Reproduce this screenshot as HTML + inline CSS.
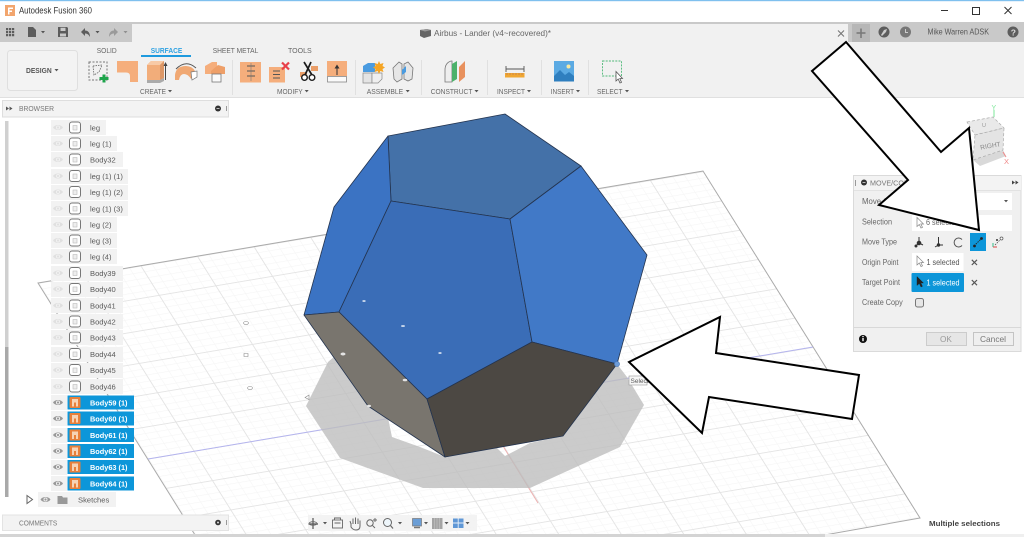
<!DOCTYPE html>
<html><head><meta charset="utf-8"><title>Autodesk Fusion 360</title>
<style>
html,body{margin:0;padding:0;background:#fff;width:1024px;height:537px;overflow:hidden}
svg{display:block;filter:blur(.35px)}
text{font-family:"Liberation Sans",sans-serif;font-size:7.6px;fill:#5a5a5a}
.b{font-weight:bold}
.w{fill:#fff;font-weight:bold}
.g{font-size:7.2px;fill:#666}
.t{font-size:7.2px;fill:#666}
.p{font-size:7.8px;fill:#666}
</style></head><body>
<svg width="1024" height="537" viewBox="0 0 1024 537" xmlns="http://www.w3.org/2000/svg">
<defs>
<pattern id="grid" patternUnits="userSpaceOnUse" width="100" height="100" patternTransform="matrix(.566 -.095 .183 .293 668 209.5)">
<rect x="20" width="1.1" height="100" fill="#f5f5f5"/><rect x="40" width="1.1" height="100" fill="#f5f5f5"/><rect x="60" width="1.1" height="100" fill="#f5f5f5"/><rect x="80" width="1.1" height="100" fill="#f5f5f5"/>
<rect y="20" width="100" height="1.9" fill="#f5f5f5"/><rect y="40" width="100" height="1.9" fill="#f5f5f5"/><rect y="60" width="100" height="1.9" fill="#f5f5f5"/><rect y="80" width="100" height="1.9" fill="#f5f5f5"/>
<rect x="0" width="1.6" height="100" fill="#e2e2e2"/><rect y="0" width="100" height="2.6" fill="#e2e2e2"/>
</pattern>
<g id="eye"><path d="M-5 0C-3-3.4 3-3.4 5 0C3 3.4-3 3.4-5 0Z" fill="currentColor"/><circle r="2" fill="#f2f2f2"/><circle r="1.1" fill="currentColor"/></g>
<g id="body"><rect x="-5.5" y="-5.5" width="11" height="11" rx="2.5" fill="#fff" stroke="#777" stroke-width="1"/><rect x="-2" y="-2" width="4" height="4.5" fill="#eee" stroke="#bbb" stroke-width=".6"/></g>
<g id="bodyS"><rect x="-5.5" y="-5.5" width="11" height="11" rx="1" fill="#e8803a"/><path d="M-3-3.5H3V4H1V0H-1V4H-3Z" fill="#f6d3b5"/></g>
<path id="car" d="M-2-1H2L0 1.4Z" fill="#555"/>
</defs>

<!-- viewport -->
<polygon points="38,283 703,171 920,518 813.4,537 196.3,537" fill="#fff"/>
<polygon points="38,283 703,171 920,518 813.4,537 196.3,537" fill="url(#grid)"/>
<path d="M196.300 537L38 283L703 171L920 518L813.400 537" fill="none" stroke="#aaa" stroke-width="1"/>
<path d="M148 459L813 347" stroke="#b4b4ee" stroke-width="1"/>
<path d="M503 446L538 503" stroke="#eeb0b0" stroke-width="1"/>
<path fill-rule="evenodd" d="M328 362L306 406L340 458L423 488L530 488L620 447L644 405L627 377L617 364L400 300ZM388 418L392 437L420 447L445 457ZM497 448L505 456L530 443L563 436Z" fill="#bcbcbc" fill-opacity=".78"/>
<g fill="#fff" stroke="#888" stroke-width=".6"><ellipse cx="246" cy="323" rx="2.4" ry="1.5"/><path d="M244 353.500H248V356.500H244Z"/><ellipse cx="250" cy="388" rx="2.4" ry="1.5"/><path d="M305 397.500L309 395V399.500Z"/></g>

<!-- solid -->
<g stroke="#24344f" stroke-width=".8" stroke-linejoin="round">
<polygon points="388,136 505,114 581,166 510,219 391,201" fill="#4471a8"/>
<polygon points="388,136 391,201 339,312 304,315 334,207" fill="#3b73c3"/>
<polygon points="391,201 510,219 532,342 427,399 339,312" fill="#3a6db7"/>
<polygon points="581,166 647,255 617,364 532,342 510,219" fill="#4179c7"/>
<polygon points="304,315 339,312 427,399 445,457 368,406" fill="#79756e"/>
<polygon points="427,399 532,342 617,364 563,436 445,457" fill="#4c4843"/>
</g>
<g fill="#c4d4ea"><ellipse cx="364" cy="301" rx="1.700" ry="1"/><ellipse cx="403" cy="326" rx="2" ry="1"/><ellipse cx="440" cy="353" rx="1.700" ry="1"/></g>
<g fill="#e4e4e4"><ellipse cx="343" cy="354" rx="2.500" ry="1.500"/><ellipse cx="405" cy="380" rx="2.300" ry="1.300"/><ellipse cx="369" cy="406" rx="2" ry="1.200"/></g>
<circle cx="617" cy="364" r="2.600" fill="#6c9bd8" stroke="#4b78b6" stroke-width=".6"/>
<rect x="629" y="376" width="18" height="9" fill="#f6f6f6" stroke="#999" stroke-width=".6"/>
<text x="630.500" y="383" style="font-size:6.500px">Select</text>

<!-- title bar -->
<rect width="1024" height="1.200" fill="#7fc0ee"/>
<rect x="5" y="5" width="10" height="11" fill="#f2a56d"/><path d="M8 7.500H13V9H9.500V10.500H12V12H9.500V14.500H8Z" fill="#fff"/>
<text x="19" y="13.500" textLength="73" lengthAdjust="spacingAndGlyphs" style="font-size:8.800px;fill:#333">Autodesk Fusion 360</text>
<path d="M941 10.500H948" stroke="#333" stroke-width="1"/>
<rect x="972.500" y="7.500" width="7" height="7" fill="none" stroke="#333" stroke-width="1"/>
<path d="M1004.500 7L1011.500 14M1011.500 7L1004.500 14" stroke="#333" stroke-width="1"/>

<!-- quick bar -->
<rect y="22" width="1024" height="20" fill="#c9c9c9"/>
<rect x="132" y="24" width="716" height="18" fill="#f1f1f1"/>
<rect x="852" y="24" width="18" height="18" fill="#b7b7b7"/>
<g fill="#5c5c5c">
<path d="M6 28h2.200v2.200H6zM9 28h2.200v2.200H9zM12 28h2.200v2.200H12zM6 31h2.200v2.200H6zM9 31h2.200v2.200H9zM12 31h2.200v2.200H12zM6 34h2.200v2.200H6zM9 34h2.200v2.200H9zM12 34h2.200v2.200H12z"/>
<path d="M28 27h5l3 3v7h-8z"/><use href="#car" x="43" y="32"/>
<path d="M58 27h9l1 1v9H58zM60.500 27.800v3.200h5v-3.200zM60 33.500v3h6v-3z" fill-rule="evenodd"/>
<path d="M81 32L85 28V30.500C88 30.500 90 32.500 90 37C88.500 34.500 87.500 33.500 85 33.500V36Z"/><use href="#car" x="97.500" y="32"/>
</g>
<path d="M118 32L114 28V30.500C111 30.500 109 32.500 109 37C110.500 34.500 111.500 33.500 114 33.500V36Z" fill="#9a9a9a"/><use href="#car" x="125.500" y="32" opacity=".5"/>
<path d="M427 29L431 30V36L424 38L420 36V30Z" fill="#666"/><path d="M420 30L427 29L431 30L425 31.500Z" fill="#999"/>
<text x="434" y="36" textLength="117" lengthAdjust="spacingAndGlyphs" style="font-size:8.400px;fill:#666">Airbus - Lander (v4~recovered)*</text>
<path d="M838 30.500L844 36.500M844 30.500L838 36.500" stroke="#777" stroke-width="1.100"/>
<path d="M861 28.500V38M856.500 33H865.500" stroke="#777" stroke-width="1.500"/>
<circle cx="884" cy="32" r="5.500" fill="#5d5d5d"/><path d="M881 35L884 30L887 29L886 32L882 36Z" fill="#ccc"/>
<circle cx="905.500" cy="32" r="5.500" fill="#777"/><path d="M905.500 29V32.500H908" stroke="#ccc" stroke-width="1" fill="none"/>
<text x="927.500" y="34.500" textLength="61.500" lengthAdjust="spacingAndGlyphs" style="font-size:7.800px;fill:#555">Mike Warren ADSK</text>
<circle cx="1013" cy="32" r="5.500" fill="#5d5d5d"/><text x="1010.700" y="35.300" class="b" style="font-size:8.500px;fill:#ddd">?</text>

<!-- ribbon -->
<rect y="42" width="1024" height="55" fill="#f1f1f1"/>
<path d="M0 97.500H1024" stroke="#e0e0e0" stroke-width="1"/>
<rect x="7.500" y="50.500" width="70" height="40" rx="3" fill="#f3f3f3" stroke="#dfdfdf"/>
<text x="26" y="73" class="b" textLength="25.700" lengthAdjust="spacingAndGlyphs" style="font-size:7px;fill:#555">DESIGN</text><use href="#car" x="56.500" y="70"/>
<text x="96.700" y="53" class="t" textLength="20" lengthAdjust="spacingAndGlyphs">SOLID</text>
<text x="150.700" y="53" class="b" textLength="31.600" lengthAdjust="spacingAndGlyphs" style="font-size:7.200px;fill:#2fa2e2">SURFACE</text>
<rect x="141" y="55" width="50" height="2" fill="#1e9ade"/>
<text x="212.700" y="53" class="t" textLength="45.600" lengthAdjust="spacingAndGlyphs">SHEET METAL</text>
<text x="288" y="53" class="t" textLength="23.700" lengthAdjust="spacingAndGlyphs">TOOLS</text>
<g stroke="#e0e0e0" stroke-width="1"><path d="M232.500 60V95M355.500 60V95M421.500 60V95M487.500 60V95M541.500 60V95M588.500 60V95"/></g>
<g class="labels">
<text x="140" y="94" class="g" textLength="26" lengthAdjust="spacingAndGlyphs">CREATE</text><use href="#car" x="170" y="91"/>
<text x="277" y="94" class="g" textLength="25.700" lengthAdjust="spacingAndGlyphs">MODIFY</text><use href="#car" x="306.700" y="91"/>
<text x="366.700" y="94" class="g" textLength="36.500" lengthAdjust="spacingAndGlyphs">ASSEMBLE</text><use href="#car" x="407.700" y="91"/>
<text x="430.700" y="94" class="g" textLength="41.700" lengthAdjust="spacingAndGlyphs">CONSTRUCT</text><use href="#car" x="476.500" y="91"/>
<text x="497" y="94" class="g" textLength="28" lengthAdjust="spacingAndGlyphs">INSPECT</text><use href="#car" x="529" y="91"/>
<text x="550.700" y="94" class="g" textLength="23.300" lengthAdjust="spacingAndGlyphs">INSERT</text><use href="#car" x="578" y="91"/>
<text x="597" y="94" class="g" textLength="25.500" lengthAdjust="spacingAndGlyphs">SELECT</text><use href="#car" x="627" y="91"/>
</g>

<!-- create icons -->
<rect x="89" y="62" width="18" height="18" fill="none" stroke="#777" stroke-width="1" stroke-dasharray="2 1.500"/>
<path d="M93 66L102 65L99 72L94 75Z" fill="none" stroke="#666" stroke-width=".8" stroke-dasharray="1.500 1"/>
<path d="M102.500 74.500H105.500V77H108.500V80H105.500V82.500H102.500V80H99.500V77H102.500Z" fill="#1ea44b"/>
<path d="M117 61H138V82H130V76Q130 72.500 126 72.500H117Z" fill="#f5ae7c"/>
<path d="M147 65L151 61H164V78L160 80H147Z" fill="#f2ad7a"/><path d="M147 65L151 61H164L160 65Z" fill="#f8caa6"/><path d="M160 65L164 61V78L160 80Z" fill="#dc9766"/>
<path d="M147 80H160L164 78V81L160 83H147Z" fill="#aaa"/>
<path d="M165.500 65V80" stroke="#444" stroke-width="1"/><path d="M163.500 66L165.500 62L167.500 66Z" fill="#444"/>
<path d="M176 69Q186 59 196 68" fill="none" stroke="#555" stroke-width="1"/>
<path d="M175 75Q176 66 186 66Q192 66 195 71L191 79Q188 74 184 74Q180 74 179 80H175Z" fill="#f0a873"/>
<path d="M191 72L197 71V77L192 80Z" fill="#fff" stroke="#777" stroke-width=".7"/>
<path d="M205 66L212 62H217V67L213 70V74H205Z" fill="#f5ae7c"/><path d="M218 65L225 67V74H211V71Z" fill="#ee9f68"/>
<rect x="212" y="74" width="9" height="8" fill="#fafafa" stroke="#777" stroke-width=".8"/>

<!-- modify icons -->
<rect x="240" y="62" width="21" height="20.500" fill="#f5ae7c"/>
<path d="M247 66H255M247 71H255M247 76H255" stroke="#555" stroke-width="1"/><path d="M251 63V81" stroke="#777" stroke-width=".6"/>
<rect x="269" y="67" width="16" height="15.500" fill="#f5ae7c"/>
<path d="M273 71H280M273 74.500H280M273 78H280" stroke="#555" stroke-width="1"/>
<path d="M282 62.500L289 69.500M289 62.500L282 69.500" stroke="#e8404a" stroke-width="2.200"/>
<path d="M311 66H318V71H311ZM300 72H307V77H300Z" fill="#ea9e68"/>
<path d="M304 62L312 75M311 62L305 75" stroke="#1c1c1c" stroke-width="1.700"/>
<circle cx="304.500" cy="77.500" r="2.800" fill="#fff" stroke="#1c1c1c" stroke-width="1.400"/><circle cx="312" cy="77.500" r="2.800" fill="#fff" stroke="#1c1c1c" stroke-width="1.400"/>
<rect x="327" y="61" width="20" height="15" fill="#f5ae7c"/><rect x="327.500" y="76.500" width="19" height="5.500" fill="#fafafa" stroke="#888" stroke-width=".8"/>
<path d="M337 75V67" stroke="#333" stroke-width="1"/><path d="M334.500 68.500L337 64.500L339.500 68.500Z" fill="#333"/>

<!-- assemble -->
<path d="M363 66L368 63H375V72H363Z" fill="#4a9be0"/><path d="M363 73H372V83H363Z" fill="#e4e4e4" stroke="#888" stroke-width=".7"/><path d="M372 73H382V79L378 83H372Z" fill="#efefef" stroke="#888" stroke-width=".7"/>
<path d="M379 61L380.300 64L383.500 63L382.500 66L385 67.500L382.500 69L383.500 72L380.300 71L379 74L377.700 71L374.500 72L375.500 69L373 67.500L375.500 66L374.500 63L377.700 64Z" fill="#f5a524"/>
<path d="M393 68L399 62L402 64V79L397 82L394 79Z" fill="#e6e6e6" stroke="#777" stroke-width=".8"/>
<path d="M413 68L408 62L404 64V79L408 81L412 79Z" fill="#e6e6e6" stroke="#777" stroke-width=".8"/><path d="M402 70L406 66V72L402 75Z" fill="#4a9be0"/>

<!-- construct -->
<path d="M445 82V70Q445 63 451 61H452V82Z" fill="#eee" stroke="#777" stroke-width=".8"/>
<path d="M452 64L457 61V79L452 82Z" fill="#4cb16a"/>
<path d="M459 67L465 61V77L459 82Z" fill="#e8915e"/>

<!-- inspect -->
<path d="M506 69H524M506 66V72M524 66V72" stroke="#555" stroke-width=".9" fill="none"/>
<rect x="505" y="73" width="19.500" height="4.500" fill="#f0a732"/>
<path d="M507 73v2M510 73v2M513 73v2M516 73v2M519 73v2M522 73v2" stroke="#a66" stroke-width=".5"/>

<!-- insert -->
<rect x="554" y="61" width="20" height="20.500" fill="#5baae3"/>
<path d="M554 76L560 70L565 75L569 72L574 76V81.500H554Z" fill="#2f7fbf"/>
<circle cx="568.500" cy="66.500" r="2" fill="#f7e9a3"/>

<!-- select -->
<rect x="602.500" y="61" width="19" height="15" fill="none" stroke="#4fb878" stroke-width=".9" stroke-dasharray="2 1.200"/>
<path d="M616 71.500V81L618.200 79L620 83L621.500 82.300L619.800 78.500H622.500Z" fill="#fff" stroke="#555" stroke-width=".8"/>

<!-- browser -->
<rect x="2.500" y="100.500" width="226" height="16.500" fill="#f3f3f3" stroke="#dedede"/>
<path d="M9 108.500L6 106.500V110.500ZM12.500 108.500L9.500 106.500V110.500Z" fill="#555"/>
<text x="19" y="111" class="t" textLength="35" lengthAdjust="spacingAndGlyphs" style="fill:#777">BROWSER</text>
<circle cx="218" cy="108.500" r="3" fill="#333"/><path d="M216.500 108.500H219.500" stroke="#ddd" stroke-width=".8"/>
<path d="M226.500 106V111" stroke="#999" stroke-width="1"/>
<rect x="5" y="121" width="3.500" height="226" fill="#d0d0d0"/>
<rect x="5" y="347" width="3.500" height="150" fill="#a9a9a9"/>

<g fill="#f2f2f2">
<rect x="51" y="120" width="55" height="15"/><rect x="51" y="136" width="66" height="15"/><rect x="51" y="152" width="72" height="15"/>
<rect x="51" y="169" width="77" height="15"/><rect x="51" y="185" width="77" height="15"/><rect x="51" y="201" width="77" height="15"/>
<rect x="51" y="217" width="66" height="15"/><rect x="51" y="233" width="66" height="15"/><rect x="51" y="249" width="66" height="15"/>
<rect x="51" y="266" width="72" height="15"/><rect x="51" y="282" width="72" height="15"/><rect x="51" y="298" width="72" height="15"/>
<rect x="51" y="314" width="72" height="15"/><rect x="51" y="330" width="72" height="15"/><rect x="51" y="347" width="72" height="15"/>
<rect x="51" y="363" width="72" height="15"/><rect x="51" y="379" width="72" height="15"/>
<rect x="51" y="395" width="16" height="15"/><rect x="51" y="411" width="16" height="15"/><rect x="51" y="428" width="16" height="15"/>
<rect x="51" y="444" width="16" height="15"/><rect x="51" y="460" width="16" height="15"/><rect x="51" y="476" width="16" height="15"/>
<rect x="38" y="492" width="78" height="15"/>
</g>
<g fill="#0d96d9">
<rect x="67.500" y="395.500" width="66.500" height="14"/><rect x="67.500" y="411.500" width="66.500" height="14"/><rect x="67.500" y="428" width="66.500" height="14"/>
<rect x="67.500" y="444" width="66.500" height="14"/><rect x="67.500" y="460" width="66.500" height="14"/><rect x="67.500" y="476.500" width="66.500" height="14"/>
</g>
<g style="color:#e0e0e0">
<use href="#eye" x="58" y="127.500"/><use href="#eye" x="58" y="143.500"/><use href="#eye" x="58" y="159.500"/><use href="#eye" x="58" y="176"/><use href="#eye" x="58" y="192"/><use href="#eye" x="58" y="208.500"/><use href="#eye" x="58" y="224.500"/><use href="#eye" x="58" y="240.500"/><use href="#eye" x="58" y="256.500"/><use href="#eye" x="58" y="273"/><use href="#eye" x="58" y="289"/><use href="#eye" x="58" y="305.500"/><use href="#eye" x="58" y="321.500"/><use href="#eye" x="58" y="337.500"/><use href="#eye" x="58" y="354"/><use href="#eye" x="58" y="370"/><use href="#eye" x="58" y="386.500"/>
</g>
<g style="color:#999">
<use href="#eye" x="58" y="402.500"/><use href="#eye" x="58" y="418.500"/><use href="#eye" x="58" y="435"/><use href="#eye" x="58" y="451"/><use href="#eye" x="58" y="467"/><use href="#eye" x="58" y="483.500"/><use href="#eye" x="45.500" y="499.500"/>
</g>
<use href="#body" x="75" y="127.500"/><use href="#body" x="75" y="143.500"/><use href="#body" x="75" y="159.500"/><use href="#body" x="75" y="176"/><use href="#body" x="75" y="192"/><use href="#body" x="75" y="208.500"/><use href="#body" x="75" y="224.500"/><use href="#body" x="75" y="240.500"/><use href="#body" x="75" y="256.500"/><use href="#body" x="75" y="273"/><use href="#body" x="75" y="289"/><use href="#body" x="75" y="305.500"/><use href="#body" x="75" y="321.500"/><use href="#body" x="75" y="337.500"/><use href="#body" x="75" y="354"/><use href="#body" x="75" y="370"/><use href="#body" x="75" y="386.500"/>
<use href="#bodyS" x="75" y="402.500"/><use href="#bodyS" x="75" y="418.500"/><use href="#bodyS" x="75" y="435"/><use href="#bodyS" x="75" y="451"/><use href="#bodyS" x="75" y="467"/><use href="#bodyS" x="75" y="483.500"/>
<text x="90" y="130.300">leg</text><text x="90" y="146.300">leg (1)</text><text x="90" y="162.300">Body32</text>
<text x="90" y="178.800">leg (1) (1)</text><text x="90" y="194.800">leg (1) (2)</text><text x="90" y="211.300">leg (1) (3)</text>
<text x="90" y="227.300">leg (2)</text><text x="90" y="243.300">leg (3)</text><text x="90" y="259.300">leg (4)</text>
<text x="90" y="275.800">Body39</text><text x="90" y="291.800">Body40</text><text x="90" y="308.300">Body41</text>
<text x="90" y="324.300">Body42</text><text x="90" y="340.300">Body43</text><text x="90" y="356.800">Body44</text>
<text x="90" y="372.800">Body45</text><text x="90" y="389.300">Body46</text>
<text x="90" y="405.300" class="w" textLength="37.500" lengthAdjust="spacingAndGlyphs">Body59 (1)</text><text x="90" y="421.300" class="w" textLength="37.500" lengthAdjust="spacingAndGlyphs">Body60 (1)</text>
<text x="90" y="437.800" class="w" textLength="37.500" lengthAdjust="spacingAndGlyphs">Body61 (1)</text><text x="90" y="453.800" class="w" textLength="37.500" lengthAdjust="spacingAndGlyphs">Body62 (1)</text>
<text x="90" y="469.800" class="w" textLength="37.500" lengthAdjust="spacingAndGlyphs">Body63 (1)</text><text x="90" y="486.300" class="w" textLength="37.500" lengthAdjust="spacingAndGlyphs">Body64 (1)</text>
<path d="M27 495.500L32.500 499.500L27 503.500Z" fill="#fff" stroke="#666" stroke-width="1"/>
<path d="M57.500 496H62L63 497.500H67.500V504H57.500Z" fill="#999"/>
<text x="78" y="502.300">Sketches</text>

<!-- comments -->
<rect x="2.500" y="515" width="226" height="15.500" fill="#f3f3f3" stroke="#e3e3e3"/>
<text x="19" y="525.500" class="t" textLength="38.300" lengthAdjust="spacingAndGlyphs" style="fill:#777">COMMENTS</text>
<circle cx="218" cy="522.500" r="2.800" fill="#333"/><circle cx="218" cy="522.500" r="1" fill="#ddd"/>
<path d="M226.500 520V525" stroke="#999" stroke-width="1"/>
<rect y="534" width="825" height="3" fill="#d4d4d4"/><rect x="825" y="534" width="199" height="3" fill="#efefef"/>
<text x="929" y="526" class="b" textLength="71" lengthAdjust="spacingAndGlyphs" style="fill:#444">Multiple selections</text>

<!-- nav bar -->
<rect x="308" y="515" width="169" height="16" fill="#f2f2f2" opacity=".9"/>
<g>
<path d="M313 518V529M308.500 524H318" stroke="#555" stroke-width="1.200"/><ellipse cx="313" cy="523.500" rx="4" ry="1.800" fill="none" stroke="#666" stroke-width=".8"/>
<use href="#car" x="325" y="523"/>
<rect x="332.500" y="520" width="10" height="8" fill="none" stroke="#666" stroke-width=".9"/><path d="M334.500 520V518H340.500V520M334.500 523H340.500" stroke="#666" stroke-width=".9" fill="none"/>
<path d="M351 523V527Q353 530 356 530Q360 530 360 526V520.500M351 524L350 521M353 524V518.500M355.500 524V517.500M358 524V518.500" fill="none" stroke="#666" stroke-width="1"/>
<circle cx="370" cy="523" r="3.200" fill="none" stroke="#666" stroke-width="1"/><path d="M372.500 525.500L375 528M375 518V522M373 520H377" stroke="#666" stroke-width=".9"/>
<circle cx="387.500" cy="522.500" r="4" fill="#eef6fb" stroke="#666" stroke-width="1"/><path d="M390.500 525.500L393 528.500" stroke="#666" stroke-width="1.200"/><use href="#car" x="400" y="523"/>
<rect x="412.500" y="518.500" width="9" height="7.500" fill="#6b9ed6" stroke="#777" stroke-width=".7"/><path d="M414 527.500H420" stroke="#777" stroke-width="1.500"/><use href="#car" x="426" y="523"/>
<rect x="432" y="518" width="10.500" height="11" fill="#a4a4a4"/><path d="M434.500 518V529M437 518V529M439.500 518V529" stroke="#ccc" stroke-width=".5"/><use href="#car" x="446.500" y="523"/>
<rect x="453" y="518.500" width="10.500" height="9.500" fill="#5f97d6"/><path d="M458.200 518.500V528M453 523H463.500" stroke="#e6eef8" stroke-width=".9"/><use href="#car" x="467.500" y="523"/>
</g>

<!-- viewcube -->
<path d="M973 160L1003 150L1006 156L980 166Z" fill="#cfcfcf" opacity=".8"/>
<polygon points="967,122 993,117 1004,128 975,135" fill="#e9e9e9" stroke="#aaa" stroke-width=".7" stroke-dasharray="3 2"/>
<polygon points="975,135 1004,128 1003,150 973,160" fill="#e4e4e4" stroke="#aaa" stroke-width=".7" stroke-dasharray="3 2"/>
<text x="980" y="148" transform="rotate(-10 990 145)" style="font-size:6.600px;fill:#888">RIGHT</text>
<text x="982" y="127" style="font-size:5.500px;fill:#999">U</text>
<path d="M994 117V110" stroke="#7ee79a" stroke-width="1"/><text x="991.500" y="110" style="font-size:7px;fill:#7ee79a">Y</text>
<path d="M1003 152L1006 157" stroke="#f08a8a" stroke-width="1"/><text x="1004" y="164" style="font-size:7.500px;fill:#f08a8a">X</text>

<!-- move panel -->
<rect x="853.500" y="175.500" width="167.500" height="176" fill="#f0f0f0" stroke="#dadada"/>
<rect x="854" y="176" width="167" height="14" fill="#f3f3f3"/>
<path d="M854 190.500H1021" stroke="#e2e2e2" stroke-width="1"/>
<path d="M855.500 180V186" stroke="#999" stroke-width="1"/>
<circle cx="864" cy="182.500" r="3" fill="#333"/><path d="M862.500 182.500H865.500" stroke="#ddd" stroke-width=".8"/>
<text x="870" y="185.500" class="t" style="fill:#777">MOVE/COPY</text>
<path d="M1015 182.500L1012 180.500V184.500ZM1018.500 182.500L1015.500 180.500V184.500Z" fill="#444"/>
<text x="862" y="204" class="p">Move Object</text>
<rect x="912" y="193" width="100" height="17" fill="#fff"/><use href="#car" x="1006" y="201"/>
<text x="862" y="224.500" class="p" textLength="30" lengthAdjust="spacingAndGlyphs">Selection</text>
<rect x="912" y="215" width="100" height="16" fill="#fff"/>
<path d="M917 217.500V226.500L919.300 224.500L921 228L922.500 227.300L920.800 224H923.500Z" fill="#fff" stroke="#888" stroke-width=".7"/>
<text x="926" y="224.800" class="p" textLength="33" lengthAdjust="spacingAndGlyphs">6 selected</text>
<text x="862" y="244.500" class="p" textLength="35" lengthAdjust="spacingAndGlyphs">Move Type</text>
<g fill="none" stroke="#333" stroke-width="1">
<path d="M919 237V243L915.500 246M919 243L923 245"/><circle cx="919" cy="243" r="1.800" fill="#333"/><circle cx="916" cy="246" r="1" fill="#333"/>
<path d="M938.500 237V245H943M938.500 245L935 247"/><circle cx="938.500" cy="245" r="1.200" fill="#333"/>
<path d="M962 239.500A4.500 4.500 0 1 0 962 245.500" stroke="#555"/>
</g>
<rect x="970" y="233" width="16" height="18" fill="#0d96d9"/>
<path d="M974 246L982 238" stroke="#222" stroke-width=".9" stroke-dasharray="1.500 1"/><circle cx="974.500" cy="246" r="1.400" fill="#222"/><circle cx="981.500" cy="238.500" r="1.400" fill="#222"/>
<path d="M995 245L1002 238" stroke="#555" stroke-width=".8" stroke-dasharray="1.500 1"/><path d="M993 243V247" stroke="#3b8" stroke-width="1"/><path d="M993 247H997" stroke="#d44" stroke-width="1"/><circle cx="1001.500" cy="238.500" r="1.500" fill="#fff" stroke="#555" stroke-width=".7"/><circle cx="997" cy="240" r="1" fill="#333"/>
<text x="862" y="264.800" class="p" textLength="36.500" lengthAdjust="spacingAndGlyphs">Origin Point</text>
<rect x="912" y="253" width="51.500" height="18" fill="#fff"/>
<path d="M917 256V265L919.300 263L921 266.500L922.500 265.800L920.800 262.500H923.500Z" fill="#fff" stroke="#888" stroke-width=".7"/>
<text x="926.500" y="265" class="p" textLength="33" lengthAdjust="spacingAndGlyphs" style="fill:#555">1 selected</text>
<path d="M971.800 259.800L977 265M977 259.800L971.800 265" stroke="#555" stroke-width="1.200"/>
<text x="862" y="285" class="p" textLength="38" lengthAdjust="spacingAndGlyphs">Target Point</text>
<rect x="911.500" y="273" width="52.500" height="19" rx="1" fill="#0d96d9"/>
<path d="M917 276.500V285.500L919.300 283.500L921 287L922.500 286.300L920.800 283H923.500Z" fill="#222" stroke="#222" stroke-width=".4"/>
<text x="926.500" y="285.500" class="p" textLength="33" lengthAdjust="spacingAndGlyphs" style="fill:#fff">1 selected</text>
<path d="M971.800 280L977 285.200M977 280L971.800 285.200" stroke="#555" stroke-width="1.200"/>
<text x="862" y="305" class="p" textLength="40.700" lengthAdjust="spacingAndGlyphs">Create Copy</text>
<rect x="915.500" y="298.500" width="8" height="8.500" rx="2" fill="#e6e6e6" stroke="#777" stroke-width="1"/>
<path d="M854 327.500H1021" stroke="#d8d8d8" stroke-width="1"/>
<circle cx="863" cy="339" r="4" fill="#111"/><rect x="862.300" y="338" width="1.400" height="3.200" fill="#fff"/><rect x="862.300" y="336" width="1.400" height="1.200" fill="#fff"/>
<rect x="926.500" y="332.500" width="40" height="13" fill="#e6e6e6" stroke="#ccc"/>
<text x="940" y="342" style="font-size:8.200px;fill:#9a9a9a">OK</text>
<rect x="973.500" y="332.500" width="40" height="13" fill="#efefef" stroke="#c4c4c4"/>
<text x="980" y="342" textLength="26" lengthAdjust="spacingAndGlyphs" style="font-size:8.200px;fill:#777">Cancel</text>

<!-- arrows -->
<polygon points="846,42 941,152 969,128 979,230 879,205 908,180 812,71" fill="#fff" stroke="#000" stroke-width="2" stroke-linejoin="miter"/>
<polygon points="629,362 720,317 716,353 859,375 852,419 709,397 702,433" fill="#fff" stroke="#000" stroke-width="2" stroke-linejoin="miter"/>
</svg>
</body></html>
